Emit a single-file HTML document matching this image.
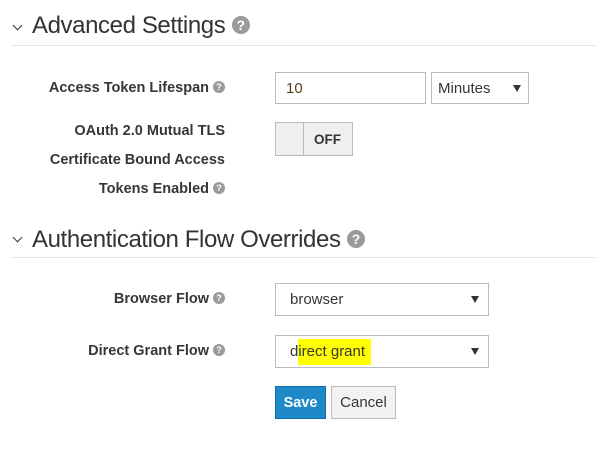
<!DOCTYPE html>
<html><head><style>
body{margin:0;width:596px;height:466px;background:#fff;font-family:"Liberation Sans",sans-serif;color:#363636;position:relative;overflow:hidden}
.a{position:absolute}
h2{position:absolute;margin:0;font-weight:normal;font-size:24px;color:#333;white-space:nowrap;letter-spacing:-0.4px}
.chev{position:absolute;width:6px;height:6px;border-right:1.6px solid #333;border-bottom:1.6px solid #333;transform:rotate(45deg)}
.hr{position:absolute;left:11px;right:0;height:1px;background:#e6e6e6}
.q{display:inline-block;border-radius:50%;background:#9a9a9a;color:#fff;text-align:center;font-weight:bold;vertical-align:middle}
.lbl{position:absolute;right:371px;text-align:right;font-weight:bold;font-size:14.5px;color:#363636;white-space:nowrap}
.q1{width:12px;height:12px;font-size:9px;line-height:12px;margin-left:4px;position:relative;top:-1px}
.box{position:absolute;box-sizing:border-box;border:1px solid #bbb;background:#fff;font-size:15px;color:#363636}
.tri{position:absolute;width:0;height:0;border-left:4px solid transparent;border-right:4px solid transparent;border-top:7px solid #333}
</style></head><body>
<div class="chev" style="left:14px;top:22px"></div>
<h2 style="left:32px;top:12px">Advanced Settings <span class="q" style="width:18px;height:18px;font-size:14px;line-height:18px;position:relative;top:-2px;margin-left:0">?</span></h2>
<div class="hr" style="top:45px"></div>

<div class="lbl" style="top:80px">Access Token Lifespan<span class="q q1">?</span></div>
<div class="box" style="left:275px;top:72px;width:151px;height:32px;padding:7px 0 0 10px;color:#5a3d1e">10</div>
<div class="box" style="left:431px;top:72px;width:98px;height:32px;padding:7px 0 0 6px">Minutes<div class="tri" style="right:7px;top:12px"></div></div>

<div class="lbl" style="top:117px;right:371px;line-height:29px">OAuth 2.0 Mutual TLS<br>Certificate Bound Access<br>Tokens Enabled<span class="q q1">?</span></div>
<div class="box" style="left:275px;top:122px;width:78px;height:34px;background:#eef0f0;border-color:#bbb">
 <div class="a" style="left:27px;top:0;bottom:0;width:1px;background:#bbb"></div>
 <div class="a" style="left:38px;top:9px;font-weight:bold;font-size:13.5px;color:#333">OFF</div>
</div>

<div class="chev" style="left:14px;top:234px"></div>
<h2 style="left:32px;top:226px">Authentication Flow Overrides <span class="q" style="width:18px;height:18px;font-size:14px;line-height:18px;position:relative;top:-2px;margin-left:0">?</span></h2>
<div class="hr" style="top:257px"></div>

<div class="lbl" style="top:291px">Browser Flow<span class="q q1">?</span></div>
<div class="box" style="left:275px;top:283px;width:214px;height:33px;padding:7px 0 0 14px">browser<div class="tri" style="right:9px;top:12px"></div></div>

<div class="lbl" style="top:343px">Direct Grant Flow<span class="q q1">?</span></div>
<div class="box" style="left:275px;top:335px;width:214px;height:33px;padding:7px 0 0 14px">d<span style="background:#ffff00;padding:4px 6px 5px 0">irect grant</span><div class="tri" style="right:9px;top:12px"></div></div>

<div class="a" style="left:275px;top:386px;width:51px;height:33px;background:#1e88c8;border:1px solid #0b6fa8;box-sizing:border-box;color:#fff;font-weight:bold;font-size:14.5px;text-align:center;line-height:32px">Save</div>
<div class="a" style="left:331px;top:386px;width:65px;height:33px;background:#f2f2f2;border:1px solid #bbb;box-sizing:border-box;color:#363636;font-size:15px;text-align:center;line-height:32px">Cancel</div>
</body></html>
